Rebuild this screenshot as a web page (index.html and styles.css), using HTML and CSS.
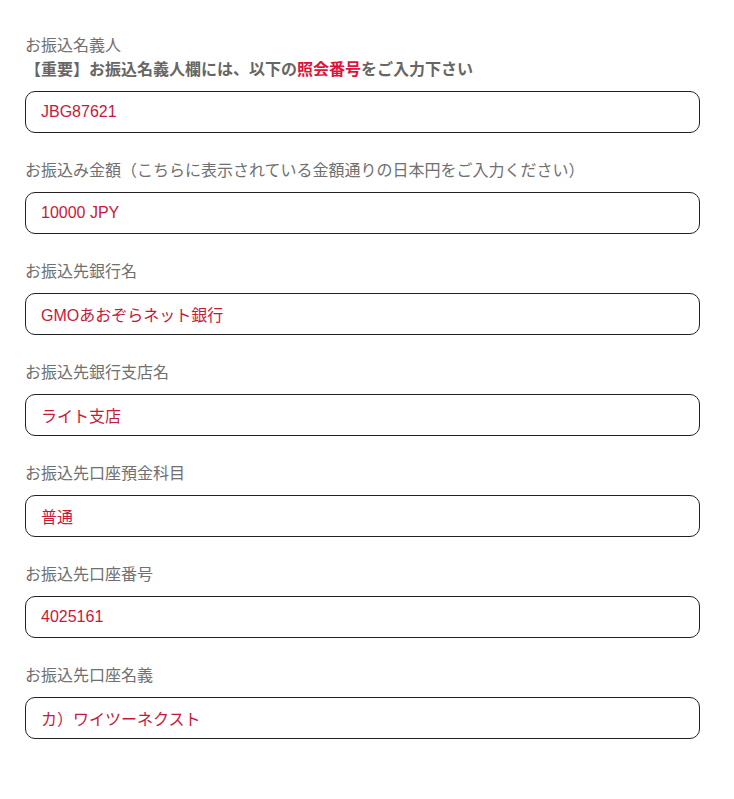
FILE: index.html
```html
<!DOCTYPE html>
<html lang="ja">
<head>
<meta charset="utf-8">
<title>お振込情報</title>
<link rel="stylesheet" href="styles.css">
</head>
<body>
<div class="form">
  <div class="field">
    <div class="label">お振込名義人</div>
    <div class="label note">【重要】お振込名義人欄には、以下の<span class="hl">照会番号</span>をご入力下さい</div>
    <input class="box" type="text" readonly value="JBG87621">
  </div>
  <div class="field">
    <div class="label">お振込み金額（こちらに表示されている金額通りの日本円をご入力ください）</div>
    <input class="box" type="text" readonly value="10000 JPY">
  </div>
  <div class="field">
    <div class="label">お振込先銀行名</div>
    <input class="box" type="text" readonly value="GMOあおぞらネット銀行">
  </div>
  <div class="field">
    <div class="label">お振込先銀行支店名</div>
    <input class="box" type="text" readonly value="ライト支店">
  </div>
  <div class="field">
    <div class="label">お振込先口座預金科目</div>
    <input class="box" type="text" readonly value="普通">
  </div>
  <div class="field">
    <div class="label">お振込先口座番号</div>
    <input class="box" type="text" readonly value="4025161">
  </div>
  <div class="field">
    <div class="label">お振込先口座名義</div>
    <input class="box" type="text" readonly value="カ）ワイツーネクスト">
  </div>
</div>
</body>
</html>
```

FILE: styles.css
```css
html, body {
  margin: 0;
  padding: 0;
  background: #ffffff;
}
body {
  font-family: "Liberation Sans", "Noto Sans CJK JP", sans-serif;
  font-size: 16px;
  color: #666666;
}
.form {
  width: 675px;
  padding: 34px 0 0 25px;
  display: flex;
  flex-direction: column;
  gap: 26px;
}
.field {
  display: flex;
  flex-direction: column;
}
.label {
  line-height: 24px;
  font-size: 16px;
  color: #707070;
  white-space: nowrap;
}
.note {
  font-weight: bold;
  color: #666666;
}
.hl {
  color: #dc143c;
}
.box {
  margin-top: 9px;
  box-sizing: border-box;
  width: 675px;
  height: 42px;
  border: 1px solid #222222;
  border-radius: 10px;
  padding: 0 15px;
  font-family: "Liberation Sans", "Noto Sans CJK JP", sans-serif;
  font-size: 16px;
  color: #c8183c;
  background: #ffffff;
  outline: none;
}
```
